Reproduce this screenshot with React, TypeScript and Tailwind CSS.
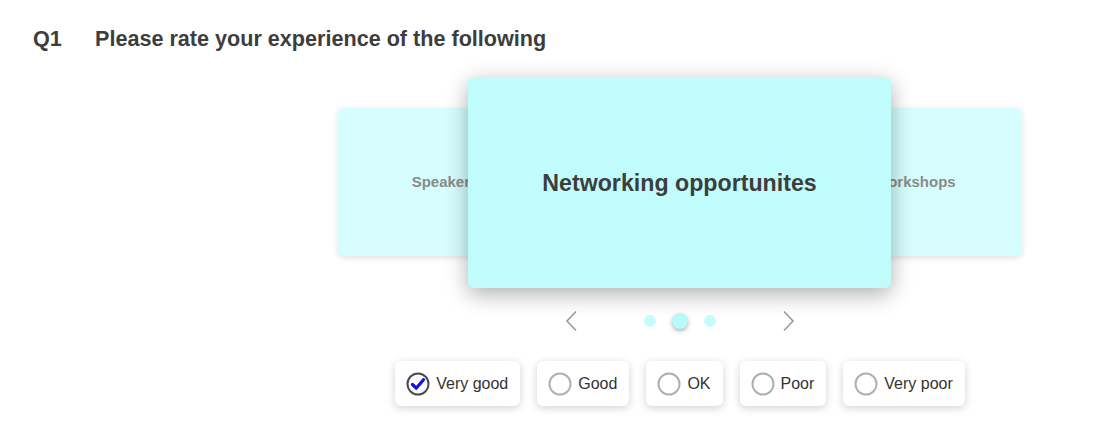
import React from 'react';

const options = ['Very good', 'Good', 'OK', 'Poor', 'Very poor'];

function Radio({ checked }: { checked: boolean }) {
    return (
        <svg width="24" height="24" viewBox="0 0 24 24" className="shrink-0">
            <circle cx="12" cy="12" r="10.5" fill="white" stroke={checked ? '#4a4a55' : '#b0b0b0'} strokeWidth="2" />
            {checked && (
                <path d="M6.5 12.5 L10.2 16.2 L17.5 7.8" fill="none" stroke="#1010f0" strokeWidth="3.2" strokeLinecap="round" strokeLinejoin="round" />
            )}
        </svg>
    );
}

export default function App() {
    const selected = 'Very good';

    return (
        <div className="w-[1107px] h-[436px] bg-white text-[#3d3d3d]" style={{ fontFamily: '"Liberation Sans", Arial, sans-serif' }}>
            {/* question header */}
            <div className="flex items-center pt-[26px] pl-[33px] text-[21.6px] font-bold leading-[26px]">
                <span className="w-[62px]">Q1</span>
                <span>Please rate your experience of the following</span>
            </div>

            <div className="pl-[253px]">
                {/* carousel */}
                <div className="relative w-[684px] h-[212px] mx-auto mt-[25px]">
                    <div className="absolute left-0 top-[31px] w-[214px] h-[148px] rounded-md bg-[#d6fefe] shadow-[0_2px_6px_rgba(0,0,0,0.12)] flex items-center justify-center text-[15px] font-bold text-[#8a8a8a]">
                        Speakers
                    </div>
                    <div className="absolute right-0 top-[31px] w-[214px] h-[148px] rounded-md bg-[#d6fefe] shadow-[0_2px_6px_rgba(0,0,0,0.12)] flex items-center justify-center text-[15px] font-bold text-[#8a8a8a]">
                        Workshops
                    </div>
                    <div className="absolute left-[130px] top-0 w-[423px] h-[211px] rounded-md bg-[#c0fcfc] shadow-[0_6px_22px_rgba(0,0,0,0.32)] flex items-center justify-center text-[23.2px] font-bold text-[#3d3d3d] pt-[1px]">
                        Networking opportunites
                    </div>
                </div>

                {/* nav */}
                <div className="flex items-center justify-center mt-[20px] h-[24px]">
                    <svg width="14" height="22" viewBox="0 0 14 22" className="mr-[66px]">
                        <path d="M12 1.5 L3 11 L12 20.5" fill="none" stroke="#9a9a9a" strokeWidth="1.6" />
                    </svg>
                    <div className="flex items-center gap-[16px]">
                        <span className="w-[12px] h-[12px] rounded-full bg-[#c8fcfc]" />
                        <span className="w-[16px] h-[16px] rounded-full bg-[#b8fafa] shadow-[0_2px_4px_rgba(0,0,0,0.3)]" />
                        <span className="w-[12px] h-[12px] rounded-full bg-[#c8fcfc]" />
                    </div>
                    <svg width="14" height="22" viewBox="0 0 14 22" className="ml-[66px]">
                        <path d="M2 1.5 L11 11 L2 20.5" fill="none" stroke="#9a9a9a" strokeWidth="1.6" />
                    </svg>
                </div>

                {/* options */}
                <div className="flex justify-center gap-[17px] mt-[28px]">
                    {options.map((o) => (
                        <div key={o} className="flex items-center gap-[6px] h-[45px] pl-[11px] pr-[12px] rounded-md bg-white shadow-[0_2px_8px_rgba(0,0,0,0.18)] text-[16px] text-[#333]">
                            <Radio checked={o === selected} />
                            <span>{o}</span>
                        </div>
                    ))}
                </div>
            </div>
        </div>
    );
}
